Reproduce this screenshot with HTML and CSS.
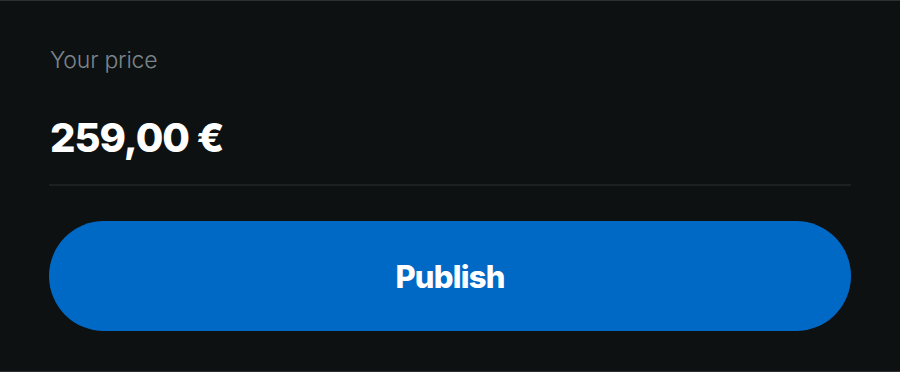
FILE: index.html
```html
<!DOCTYPE html>
<html lang="en">
<head>
    <meta charset="UTF-8">
    <meta name="viewport" content="width=device-width, initial-scale=1.0">
    <title>Your price</title>
    <link rel="stylesheet" href="styles.css">
</head>
<body>
    <div class="panel">
        <div class="price-label">Your price</div>
        <div class="price-value">259,00 €</div>
        <div class="divider"></div>
        <button class="publish-btn">Publish</button>
    </div>
</body>
</html>
```

FILE: styles.css
```css
html, body {
    margin: 0;
    padding: 0;
    background-color: #0d1112;
}
body {
    font-family: Inter, "Noto Sans", sans-serif;
}
.panel {
    box-sizing: border-box;
    width: 900px;
    height: 372px;
    border-top: 1px solid #2c3032;
    border-bottom: 1px solid #2c3032;
    padding: 44px 49px 0 49px;
    display: flex;
    flex-direction: column;
}
.price-label {
    color: #7c858b;
    font-size: 23px;
    font-weight: 300;
    letter-spacing: -0.2px;
    line-height: 30px;
    padding-left: 1px;
}
.price-value {
    color: #ffffff;
    font-size: 40px;
    font-weight: 800;
    letter-spacing: -1px;
    line-height: 50px;
    margin-top: 38px;
    padding-left: 1px;
}
.divider {
    height: 2px;
    background-color: #1c2023;
    margin-top: 21px;
}
.publish-btn {
    margin-top: 35px;
    height: 110px;
    border: none;
    border-radius: 55px;
    background-color: #0069c6;
    color: #ffffff;
    font-family: Inter, "Noto Sans", sans-serif;
    font-size: 31px;
    font-weight: 800;
    letter-spacing: -0.8px;
    cursor: pointer;
}
```
